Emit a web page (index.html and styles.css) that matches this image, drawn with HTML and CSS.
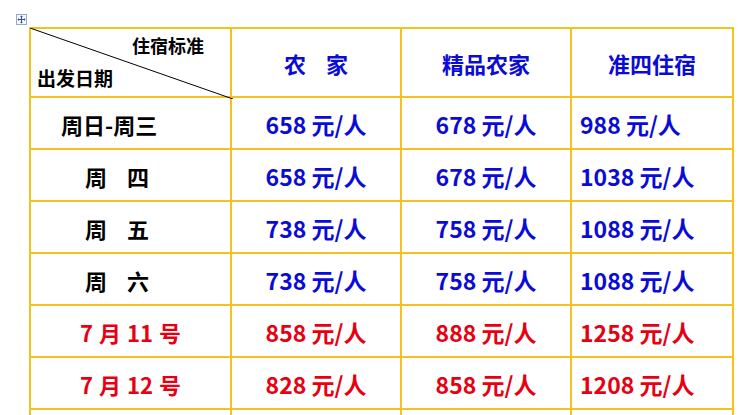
FILE: index.html
```html
<!DOCTYPE html>
<html lang="zh">
<head>
<meta charset="utf-8">
<link rel="stylesheet" href="styles.css">
</head>
<body>
<div class="page">
  <div class="move-handle">
    <svg width="11" height="11" viewBox="0 0 11 11">
      <rect x="0.5" y="0.5" width="10" height="10" fill="#f4f7fc" stroke="#9aa8c4"/>
      <path d="M5.5 2v7M2 5.5h7" stroke="#2a4fa8" stroke-width="1"/>
      <path d="M5.5 1.5l-1.5 1.5h3zM5.5 9.5l-1.5-1.5h3zM1.5 5.5l1.5-1.5v3zM9.5 5.5l-1.5-1.5v3z" fill="#2a4fa8"/>
    </svg>
  </div>
  <table class="price">
    <colgroup>
      <col class="c1"><col class="c2"><col class="c3"><col class="c4">
    </colgroup>
    <tr class="head">
      <td class="corner">
        <svg class="diag" width="203" height="71" viewBox="0 0 203 71" preserveAspectRatio="none">
          <line x1="0" y1="0" x2="203" y2="71" stroke="#000" stroke-width="1"/>
        </svg>
        <div class="corner-top">住宿标准</div>
        <div class="corner-bottom">出发日期</div>
      </td>
      <td class="hd">农&nbsp;&nbsp;&nbsp;&nbsp;家</td>
      <td class="hd">精品农家</td>
      <td class="hd">准四住宿</td>
    </tr>
    <tr>
      <td class="day d1">周日-周三</td>
      <td class="blue num mid">658 元/人</td>
      <td class="blue num mid">678 元/人</td>
      <td class="blue num last">988 元/人</td>
    </tr>
    <tr>
      <td class="day d2">周&nbsp;&nbsp;&nbsp;&nbsp;四</td>
      <td class="blue num mid">658 元/人</td>
      <td class="blue num mid">678 元/人</td>
      <td class="blue num last">1038 元/人</td>
    </tr>
    <tr>
      <td class="day d2">周&nbsp;&nbsp;&nbsp;&nbsp;五</td>
      <td class="blue num mid">738 元/人</td>
      <td class="blue num mid">758 元/人</td>
      <td class="blue num last">1088 元/人</td>
    </tr>
    <tr>
      <td class="day d2">周&nbsp;&nbsp;&nbsp;&nbsp;六</td>
      <td class="blue num mid">738 元/人</td>
      <td class="blue num mid">758 元/人</td>
      <td class="blue num last">1088 元/人</td>
    </tr>
    <tr>
      <td class="red date mid">7 月 11 号</td>
      <td class="red num mid">858 元/人</td>
      <td class="red num mid">888 元/人</td>
      <td class="red num last">1258 元/人</td>
    </tr>
    <tr>
      <td class="red date mid">7 月 12 号</td>
      <td class="red num mid">828 元/人</td>
      <td class="red num mid">858 元/人</td>
      <td class="red num last">1208 元/人</td>
    </tr>
    <tr>
      <td>&nbsp;</td>
      <td>&nbsp;</td>
      <td>&nbsp;</td>
      <td>&nbsp;</td>
    </tr>
  </table>
</div>
</body>
</html>
```

FILE: styles.css
```css
html, body {
  margin: 0;
  padding: 0;
  background: #ffffff;
}
body {
  width: 740px;
  height: 415px;
  overflow: hidden;
  font-family: "Noto Sans CJK SC", sans-serif;
  font-weight: bold;
}
.page {
  position: relative;
  height: 415px;
  overflow: hidden;
  padding: 27px 0 0 29px;
  box-sizing: border-box;
}
.move-handle {
  position: absolute;
  left: 16px;
  top: 14px;
  width: 11px;
  height: 11px;
  line-height: 0;
}
.price {
  border-collapse: collapse;
  table-layout: fixed;
  width: 703px;
}
.c1 { width: 201px; }
.c2 { width: 170px; }
.c3 { width: 170px; }
.c4 { width: 162px; }
.price td {
  border: 2px solid #f3c21f;
  padding: 2px 0 0 0;
  height: 48px;
  font-size: 22px;
  line-height: 24px;
  white-space: nowrap;
  vertical-align: middle;
}
.price tr.head td {
  height: 67px;
  padding: 0;
}
.corner {
  position: relative;
  color: #000;
}
.diag {
  position: absolute;
  left: -1px;
  top: -1px;
}
.corner-top {
  font-size: 18px;
  line-height: 22px;
  padding-left: 101px;
  margin-top: -3px;
}
.corner-bottom {
  font-size: 19px;
  line-height: 22px;
  padding-left: 6px;
  margin-top: 11px;
}
.hd {
  color: #0b0bd6;
  text-align: center;
  font-size: 21px;
}
.day {
  color: #000;
  font-size: 21px;
}
.price td.d1 { padding-left: 30px; }
.price td.d2 { padding-left: 54px; }
.price td.num { font-size: 23px; }
.price td.date { font-size: 22px; word-spacing: 1px; }
.blue { color: #0b0bd6; }
.red { color: #e60012; }
.mid { text-align: center; }
.price td.last { padding-left: 8px; }
```
